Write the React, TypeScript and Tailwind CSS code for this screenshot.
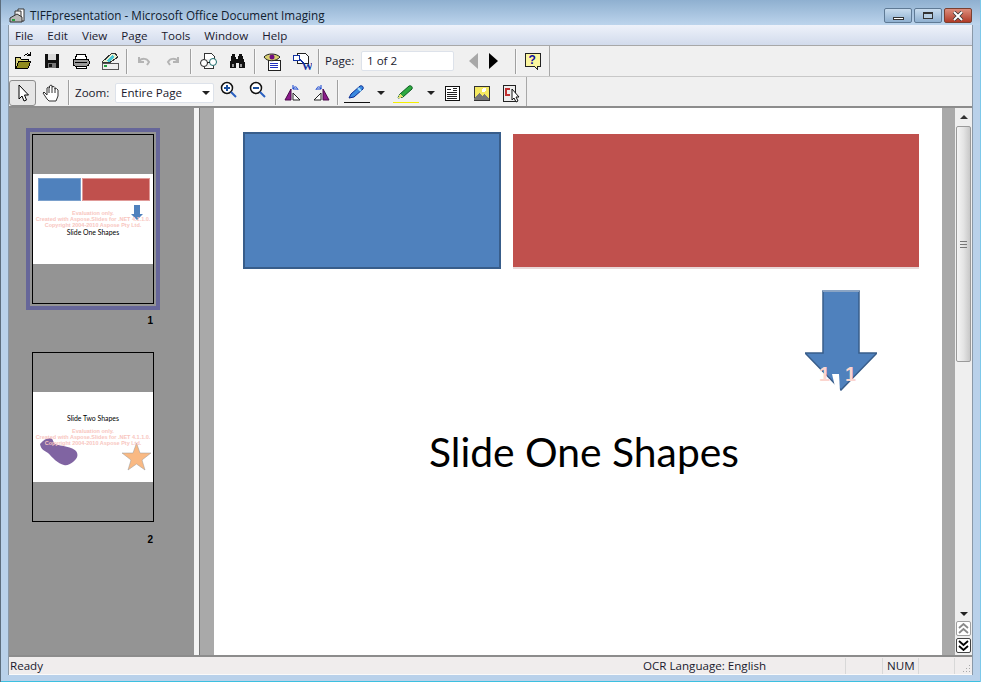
import type { ReactNode } from "react"

const ui = "font-['Open_Sans',sans-serif]"

function Slot({ children, w = "w-[29px]" }: { children: ReactNode; w?: string }) {
  return <div className={`flex h-full shrink-0 items-center justify-center ${w}`}>{children}</div>
}

function Sep({ className = "" }: { className?: string }) {
  return <div className={`h-[25px] w-[2px] shrink-0 border-l border-[#a0a0a0] bg-white/60 ${className}`} />
}

function Icon({ children, w = 20, h = 20 }: { children: ReactNode; w?: number; h?: number }) {
  return (
    <svg width={w} height={h} viewBox={`0 0 ${w} ${h}`} shapeRendering="crispEdges">
      {children}
    </svg>
  )
}

const OpenIcon = () => (
  <Icon>
    <path d="M2 6h5l1 2h7v2H6l-3 7H2z" fill="#d8d27a" stroke="#000" />
    <path d="M6 10h12l-3 7H3z" fill="#8f8a1e" stroke="#000" />
    <path d="M11 5c1-2 4-3 6-1M17 1v3h-3" fill="none" stroke="#000" />
  </Icon>
)
const SaveIcon = () => (
  <Icon>
    <rect x="3" y="3" width="14" height="14" fill="#111" />
    <rect x="6" y="3" width="8" height="6" fill="#d9d9d9" />
    <rect x="6" y="12" width="8" height="5" fill="#777" />
    <rect x="7" y="13" width="3" height="3" fill="#111" />
  </Icon>
)
const PrintIcon = () => (
  <Icon>
    <path d="M6 3h8l2 5H4z" fill="#fff" stroke="#000" />
    <rect x="2" y="8" width="16" height="7" rx="2" fill="#9a9a9a" stroke="#000" />
    <path d="M4 11h12M5 15h10v2H5z" fill="#fff" stroke="#000" />
  </Icon>
)
const ScanIcon = () => (
  <Icon>
    <path d="M2 11 12 2h3l3 4-9 6z" fill="#e6f0d0" stroke="#333" />
    <path d="M6 10l6-6 3 2-6 5z" fill="#46c6d8" />
    <path d="M2 12h16v6H2z" fill="#eee" stroke="#555" />
    <rect x="4" y="14" width="3" height="2" fill="#22a040" />
  </Icon>
)
const UndoIcon = () => (
  <Icon>
    <path d="M5 6v5h5M5 10c3-3 8-3 10 1l-2 3" fill="none" stroke="#b4b4b4" strokeWidth="2" shapeRendering="auto" />
  </Icon>
)
const RedoIcon = () => (
  <Icon>
    <path d="M15 6v5h-5M15 10c-3-3-8-3-10 1l2 3" fill="none" stroke="#b4b4b4" strokeWidth="2" shapeRendering="auto" />
  </Icon>
)
const OcrIcon = () => (
  <Icon>
    <path d="M6 8V2h7l3 3v3M6 16v1h9v-2" fill="#fff" stroke="#333" />
    <circle cx="6" cy="12" r="3.500" fill="#fff" stroke="#222" shapeRendering="auto" />
    <circle cx="15" cy="11" r="3.500" fill="#fff" stroke="#1a6a6a" shapeRendering="auto" />
    <path d="M9 11h3" stroke="#222" />
  </Icon>
)
const FindIcon = () => (
  <Icon>
    <path d="M5 3h3l1 5h2l1-5h3l3 10v4h-6v-5H9v5H3v-4z" fill="#111" />
    <rect x="5" y="13" width="2" height="3" fill="#999" />
    <rect x="13" y="13" width="2" height="3" fill="#999" />
  </Icon>
)
const EyeIcon = () => (
  <Icon>
    <path d="M5 9h12v10H5z" fill="#fff" stroke="#222" />
    <path d="M7 12h8M7 14h8M7 16h8" stroke="#2030c0" />
    <path d="M1 6c3-4 12-4 16 0-4 5-13 5-16 0z" fill="#d8d070" stroke="#222" shapeRendering="auto" />
    <circle cx="9" cy="6" r="2.500" fill="#701080" shapeRendering="auto" />
  </Icon>
)
const WordIcon = () => (
  <Icon>
    <path d="M5 2h8l3 3v7H5z" fill="#fff" stroke="#222" />
    <rect x="1" y="4" width="6" height="5" fill="#fff" stroke="#1030a0" />
    <path d="M7 8l5 4" stroke="#1030a0" strokeWidth="1.500" />
    <text x="10" y="19" fontSize="11" fontWeight="700" fill="#1030a0" fontFamily="Liberation Serif">W</text>
  </Icon>
)
const HelpIcon = () => (
  <Icon>
    <path d="M2 2h15v13h-3v3l-3-3H2z" fill="#fbf6a0" stroke="#222" />
    <text x="5.500" y="13" fontSize="12" fontWeight="700" fill="#1010a0" fontFamily="Liberation Sans">?</text>
  </Icon>
)
const PointerIcon = () => (
  <Icon>
    <path d="M6 2v14l3-3 2 5 2.500-1-2-5h4z" fill="#fff" stroke="#000" shapeRendering="auto" />
  </Icon>
)
const HandIcon = () => (
  <Icon>
    <path d="M6 16 2 10l1-1 3 3V5l1.500-1 1 1V3l1.500-1 1.500 1v1l1.500-.5 1 1V6l1.500-.5L17 7v6l-2 5H8z" fill="#fff" stroke="#333" shapeRendering="auto" />
    <path d="M8 5v5M11 3v7M14 5v5" stroke="#333" fill="none" shapeRendering="auto" />
  </Icon>
)
const Lens = ({ minus }: { minus?: boolean }) => (
  <div className="-mt-[4px]">
    <Icon>
      <circle cx="8" cy="7" r="5.500" fill="#fff" stroke="#111" strokeWidth="1.500" shapeRendering="auto" />
      <path d="M5 7h6" stroke="#1a50a0" strokeWidth="1.500" />
      {!minus && <path d="M8 4v6" stroke="#1a50a0" strokeWidth="1.500" />}
      <path d="m12 11 5 5" stroke="#2a60c0" strokeWidth="2" shapeRendering="auto" />
    </Icon>
  </div>
)
const Rotate = ({ flip }: { flip?: boolean }) => (
  <Icon>
    <g transform={flip ? "matrix(-1 0 0 1 20 0)" : undefined}>
      <path d="M8 6v11H2z" fill="#8b1a8b" stroke="#4a0a4a" shapeRendering="auto" />
      <path d="M10 10v7h7z" fill="#fff" stroke="#222" shapeRendering="auto" />
      <path d="M10 6c1-3 4-3 5 1M10 2v4h4" fill="none" stroke="#1040d0" shapeRendering="auto" />
    </g>
  </Icon>
)
const PenIcon = () => (
  <Icon w={28} h={20}>
    <path d="M6 15 8 11 17 3c2-1 4 1 3 3l-9 8z" fill="#3a8ae0" stroke="#0a2a90" shapeRendering="auto" />
    <path d="M15 5l3 3" stroke="#a0e0ff" strokeWidth="2" shapeRendering="auto" />
    <path d="M1 19h26" stroke="#111" />
  </Icon>
)
const PencilIcon = () => (
  <Icon w={28} h={20}>
    <path d="M6 15 8 11 17 3c2-1 4 1 3 3l-9 8z" fill="#2eaa40" stroke="#0a5a20" shapeRendering="auto" />
    <path d="M6 15 8 11l3 3z" fill="#e8e070" />
    <path d="M1 19h26" stroke="#f5f000" strokeWidth="1" />
  </Icon>
)
const TextBoxIcon = () => (
  <Icon>
    <rect x="3" y="3" width="14" height="14" fill="#fff" stroke="#111" />
    <path d="M5 6h4M11 5h4M11 7h4M5 9h10M5 11h10M5 13h10M5 15h10" stroke="#222" />
  </Icon>
)
const ImageIcon = () => (
  <Icon>
    <rect x="2" y="3" width="15" height="14" fill="#f5e960" stroke="#333" />
    <path d="M2 16l5-6 3 3 2-2 5 5v1H2z" fill="#777" />
    <circle cx="12" cy="7" r="2" fill="#fff" />
  </Icon>
)
const SelectIcon = () => (
  <Icon>
    <rect x="2" y="2" width="12" height="16" fill="#eee" stroke="#222" />
    <path d="M9 6H5v6h4" fill="none" stroke="#c03030" strokeWidth="1.500" />
    <path d="M11 6v11l2-2 2 4 2-1-2-4h3z" fill="#fff" stroke="#111" shapeRendering="auto" />
  </Icon>
)
const Caret = () => <div className="h-0 w-0 border-x-[4px] border-t-[4px] border-x-transparent border-t-[#222]" />

function Thumb({ two }: { two?: boolean }) {
  return (
    <div className="flex h-full w-full flex-col justify-center border border-black bg-[#949494]">
      <div className="relative h-[90px] w-full overflow-hidden bg-white">
        {!two && (
          <div className="flex gap-[1px] pl-[5px] pt-[4px]">
            <div className="h-[23px] w-[43px] shrink-0 bg-[#4f81bd] shadow-[inset_0_0_0_1px_#7aa0cc]" />
            <div className="h-[23px] w-[68px] shrink-0 bg-[#c0504d] shadow-[inset_0_0_0_1px_#e09a98]" />
          </div>
        )}
        {!two && (
          <svg width="12" height="15" viewBox="0 0 12 15" className="absolute left-[98px] top-[31px]">
            <path d="M3 0h6v9h3l-6 6-6-6h3z" fill="#4f81bd" />
          </svg>
        )}
        {two && (
          <svg width="120" height="40" viewBox="0 0 120 40" className="absolute left-0 top-[46px]">
            <path d="M7 6C10 2 14 0 17 0c3 0 3 4 5 6 6 2 18 3 21 7 3 4 1 8-3 11-3 2-6 4-9 3-6-1-12-8-16-12-3-2-7-3-8-9z" fill="#8064a2" />
            <path d="m103.500 5 3.500 10h11l-9 7 3 10-8.500-6-8.500 6 3-10-9-7h11z" fill="#f9b983" stroke="#999" strokeWidth=".5" />
          </svg>
        )}
        <div className="absolute left-0 right-0 top-[36px] flex flex-col items-center font-['Liberation_Sans',sans-serif] text-[5.500px] font-bold leading-[6px] text-[#f8c6c0]">
          <span>Evaluation only.</span>
          <span>Created with Aspose.Slides for .NET 4.1.1.0.</span>
          <span>Copyright 2004-2010 Aspose Pty Ltd.</span>
        </div>
        <div className="absolute left-0 right-0 text-center font-['Lato',sans-serif] text-[6.900px] leading-[8px] text-black" style={{ top: two ? 22 : 54 }}>
          {two ? "Slide Two Shapes" : "Slide One Shapes"}
        </div>
      </div>
    </div>
  )
}

export default function App() {
  return (
    <div className={`flex h-[682px] w-[981px] flex-col overflow-hidden border-l border-r border-l-[#5c6d7d] border-r-[#7cc8ea] bg-[#b9d1ea] text-[11.600px] text-[#1a1a2e] ${ui}`}>
      {/* title bar */}
      <div className="flex h-[25px] shrink-0 items-center bg-gradient-to-b from-[#8fb0d0] to-[#bcd4ec] pl-[8px] pr-[8px] pt-[6px]">
        <svg width="18" height="18" viewBox="0 0 18 18" className="mr-[3px]">
          <path d="M9 2h6v12H9z" fill="#fff" stroke="#333" />
          <path d="M6 4h6v10H6z" fill="#eee" stroke="#333" />
          <path d="M1 11l7-4 5 3v5H1z" fill="#b8b8b8" stroke="#333" />
          <rect x="3" y="12" width="3" height="2" fill="#2aa040" />
        </svg>
        <span className="text-[11.700px] leading-none text-[#10202e]">TIFFpresentation - Microsoft Office Document Imaging</span>
        <div className="ml-auto flex items-start gap-[2px] self-start pt-[2px]">
          <div className="flex h-[15px] w-[28px] items-center justify-center rounded-[2px] border border-[#5f7a95] bg-gradient-to-b from-[#c8dcee] to-[#8fb0d0]">
            <div className="mt-[5px] h-[3px] w-[11px] border border-[#333] bg-white" />
          </div>
          <div className="flex h-[15px] w-[28px] items-center justify-center rounded-[2px] border border-[#5f7a95] bg-gradient-to-b from-[#c8dcee] to-[#8fb0d0]">
            <div className="h-[7px] w-[10px] border border-[#333] border-t-2 bg-[#b8cfe3]" />
          </div>
          <div className="flex h-[15px] w-[28px] items-center justify-center rounded-[2px] border border-[#7a4030] bg-gradient-to-b from-[#dc8d7c] to-[#b03a28]">
            <svg width="12" height="10" viewBox="0 0 12 10">
              <path d="m2 1 8 8M10 1 2 9" stroke="#333" strokeWidth="3.500" />
              <path d="m2 1 8 8M10 1 2 9" stroke="#fff" strokeWidth="2" />
            </svg>
          </div>
        </div>
      </div>

      <div className="ml-[7px] flex w-[965px] flex-1 flex-col border-x border-[#8a99a8] bg-[#f0f0f0]">
        {/* menu */}
        <div className="flex h-[20px] shrink-0 items-center gap-[14px] bg-gradient-to-b from-[#eef2fa] to-[#d2dbec] pl-[6px] pt-[1px]">
          {["File", "Edit", "View", "Page", "Tools", "Window", "Help"].map((m) => (
            <span key={m}>{m}</span>
          ))}
        </div>

        {/* toolbar 1 */}
        <div className="flex h-[32px] shrink-0 border-y border-t-[#a8a8a8] border-b-[#c8c8c8]">
          <div className="flex h-full items-center border-r border-[#a8a8a8]">
            <Slot w="w-[28px]"><OpenIcon /></Slot>
            <Slot><SaveIcon /></Slot>
            <Slot><PrintIcon /></Slot>
            <Slot><ScanIcon /></Slot>
            <Sep className="ml-[2px] mr-[1px]" />
            <Slot><UndoIcon /></Slot>
            <Slot><RedoIcon /></Slot>
            <Sep className="ml-[3px] mr-[1px]" />
            <Slot><OcrIcon /></Slot>
            <Slot><FindIcon /></Slot>
            <Sep className="ml-[3px] mr-[2px]" />
            <Slot><EyeIcon /></Slot>
            <Slot><WordIcon /></Slot>
            <Sep className="ml-[2px]" />
            <span className="ml-[5px] w-[31px]">Page:</span>
            <div className="ml-[5px] flex h-[20px] w-[93px] items-center rounded-[2px] border border-[#dde2ea] bg-white pl-[5px]">1 of 2</div>
            <div className="ml-[15px] h-0 w-0 border-y-[8px] border-r-[9px] border-y-transparent border-r-[#a8a8a8]" />
            <div className="ml-[11px] h-0 w-0 border-y-[8px] border-l-[9px] border-y-transparent border-l-black" />
            <Sep className="ml-[17px]" />
            <Slot w="w-[32px]"><HelpIcon /></Slot>
          </div>
        </div>

        {/* toolbar 2 */}
        <div className="flex h-[31px] shrink-0 border-b-2 border-[#8c8c8c]">
          <div className="flex h-full items-center border-r border-[#a8a8a8] pt-[2px]">
            <div className="flex h-[26px] w-[27px] items-center justify-center rounded-[3px] border border-[#8c8c8c] bg-[#e6e6e6]"><PointerIcon /></div>
            <Slot><HandIcon /></Slot>
            <Sep className="ml-[3px]" />
            <span className="ml-[5px] w-[35px]">Zoom:</span>
            <div className="ml-[5px] flex h-[20px] w-[99px] items-center justify-between rounded-[2px] border border-[#dde2ea] bg-white pl-[5px] pr-[3px]">
              Entire Page
              <Caret />
            </div>
            <Slot><Lens /></Slot>
            <Slot><Lens minus /></Slot>
            <Sep className="ml-[3px]" />
            <Slot w="w-[31px]"><Rotate /></Slot>
            <Slot w="w-[26px]"><Rotate flip /></Slot>
            <Sep className="ml-[3px]" />
            <Slot w="w-[36px]"><PenIcon /></Slot>
            <Slot w="w-[12px]"><Caret /></Slot>
            <Slot w="w-[38px]"><PencilIcon /></Slot>
            <Slot w="w-[12px]"><Caret /></Slot>
            <Slot w="w-[30px]"><TextBoxIcon /></Slot>
            <Slot><ImageIcon /></Slot>
            <Slot w="w-[30px]"><SelectIcon /></Slot>
          </div>
        </div>

        {/* body */}
        <div className="flex min-h-0 flex-1 border-b-2 border-[#8c8c8c]">
          {/* thumbnails */}
          <div className="flex w-[185px] shrink-0 flex-col bg-[#949494] pt-[20px]">
            <div className="ml-[17px] h-[182px] w-[134px] border-[4px] border-[#666699] p-[2px]">
              <Thumb />
            </div>
            <div className="mr-[41px] mt-[4px] text-right font-['Liberation_Sans',sans-serif] text-[10px] font-bold leading-[14px] text-black">1</div>
            <div className="ml-[23px] mt-[24px] h-[170px] w-[122px]">
              <Thumb two />
            </div>
            <div className="mr-[41px] mt-[11px] text-right font-['Liberation_Sans',sans-serif] text-[10px] font-bold leading-[14px] text-black">2</div>
          </div>

          {/* splitter */}
          <div className="w-[6px] shrink-0 border-r border-[#777] bg-[#f4f4f4]" />

          {/* page area */}
          <div className="flex min-w-0 flex-1 bg-[#a9a9a9] pl-[14px] pr-[13px]">
            <div className="flex-1 bg-white pl-[29px] pt-[24px]">
              <div className="flex items-end gap-[12px]">
                <div className="h-[137px] w-[258px] border-2 border-[#385d8a] bg-[#4f81bd]" />
                <div className="h-[135px] w-[406px] border-b-2 border-[#e8d8d8] bg-[#c0504d]" />
              </div>
              <div className="relative ml-[562px] mt-[21px] h-[101px] w-[72px]">
                <svg width="72" height="101" viewBox="0 0 72 101">
                  <path d="M18 1h36v62h18L36 100 0 63h18z" fill="#4f81bd" stroke="#385d8a" strokeWidth="1.500" />
                  <path d="M18 1h36" stroke="#8aa4c4" strokeWidth="2" />
                  <path d="M27 84h7l1 17h-4z" fill="#fff" />
                </svg>
                <span className="absolute left-[14px] top-[74px] font-['Liberation_Sans',sans-serif] text-[20px] font-bold leading-none text-[#fbd5cf]">1</span>
                <span className="absolute left-[40px] top-[74px] font-['Liberation_Sans',sans-serif] text-[20px] font-bold leading-none text-[#fbd5cf]">1</span>
              </div>
              <div className="ml-[-29px] mt-[36px] pl-[12px] text-center font-['Lato',sans-serif] text-[40.800px] leading-[50px] text-black">Slide One Shapes</div>
            </div>
          </div>

          {/* scrollbar */}
          <div className="flex w-[17px] shrink-0 flex-col items-center bg-[#efefef]">
            <div className="flex h-[18px] w-full items-center justify-center"><div className="h-0 w-0 border-x-[4px] border-b-[4px] border-x-transparent border-b-[#333]" /></div>
            <div className="flex h-[236px] w-[15px] flex-col items-center justify-center rounded-[2px] border border-[#9a9a9a] bg-gradient-to-r from-[#f4f4f4] via-[#e4e4e4] to-[#c8c8c8]">
              <div className="h-[7px] w-[7px] border-y border-[#777] bg-[linear-gradient(#0000_2px,#777_2px,#777_3px,#0000_3px)]" />
            </div>
            <div className="flex-1" />
            <div className="flex h-[14px] w-full items-center justify-center"><Caret /></div>
            <div className="flex h-[15px] w-[15px] items-center justify-center rounded-[2px] border border-[#a0a0a0] bg-white">
              <svg width="11" height="11" viewBox="0 0 11 11"><path d="m1 5 4.500-4L10 5M1 10l4.500-4 4.500 4" fill="none" stroke="#8a8a8a" strokeWidth="1.800" /></svg>
            </div>
            <div className="mb-[2px] mt-[2px] flex h-[15px] w-[15px] items-center justify-center rounded-[2px] border border-[#444] bg-white">
              <svg width="11" height="11" viewBox="0 0 11 11"><path d="m1 1 4.500 4L10 1M1 6l4.500 4L10 6" fill="none" stroke="#000" strokeWidth="1.800" /></svg>
            </div>
          </div>
        </div>

        {/* status bar */}
        <div className="flex h-[18px] shrink-0 items-center border-b border-[#fafafa] bg-[#f0eded] pt-[1px]">
          <span className="w-[634px] pl-[1px]">Ready</span>
          <span className="flex h-full w-[203px] items-center border-r border-[#d8d8d8]">OCR Language: English</span>
          <span className="flex h-full w-[37px] items-center border-r border-[#d8d8d8] pl-[4px]"></span>
          <span className="flex h-full w-[36px] items-center border-r border-[#d8d8d8] pl-[4px]">NUM</span>
          <span className="h-full w-[36px] border-r border-[#d8d8d8]"></span>
          <div className="flex h-full flex-1 items-end justify-end pb-[1px] pr-[1px]">
            <svg width="10" height="10" viewBox="0 0 10 10" shapeRendering="crispEdges">
              <path d="M8 2h1v1H8zM5 5h1v1H5zM8 5h1v1H8zM2 8h1v1H2zM5 8h1v1H5zM8 8h1v1H8z" fill="#a8a8a8" />
            </svg>
          </div>
        </div>
      </div>
      <div className="h-[7px] shrink-0 border-b border-[#3cc0e0] bg-[#b9d1ea]" />
    </div>
  )
}
